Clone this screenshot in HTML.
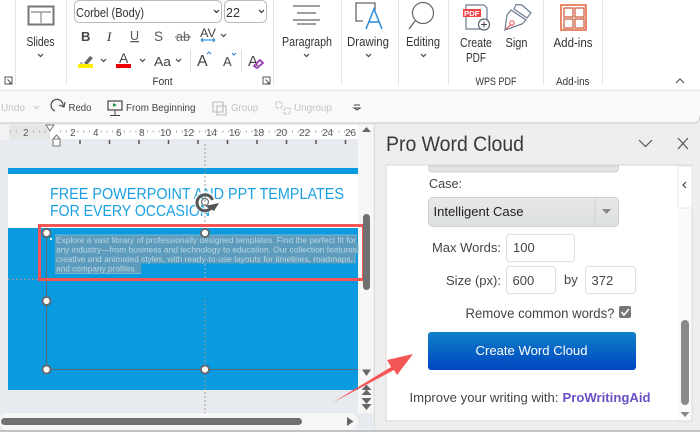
<!DOCTYPE html>
<html><head><meta charset="utf-8">
<style>
html,body{margin:0;padding:0;background:#f0f0f0;}
svg{display:block;font-family:"Liberation Sans",sans-serif;}
</style></head>
<body>
<svg width="700" height="432" viewBox="0 0 700 432" xmlns="http://www.w3.org/2000/svg" fill="#333">
<defs>
<linearGradient id="btn" x1="0" y1="0" x2="0" y2="1"><stop offset="0" stop-color="#0f80c8"/><stop offset="1" stop-color="#0046c0"/></linearGradient>
<linearGradient id="sel" x1="0" y1="0" x2="0" y2="1"><stop offset="0" stop-color="#e8e8e8"/><stop offset="1" stop-color="#dcdfe0"/></linearGradient>
</defs>
<rect width="700" height="432" fill="#eeeeee"/>
<!-- ribbon -->
<rect x="0" y="0" width="700" height="89" fill="#fff"/>
<rect x="0" y="89" width="700" height="3" fill="#f0f0f0"/>
<path d="M0 92H700V116Q700 123 693 123H0Z" fill="#f9f9f9"/>
<path d="M0 123H693Q700 123 700 116" fill="none" stroke="#c8c8c8" stroke-width="1"/>
<g stroke="#e4e4e4" stroke-width="1">
<path d="M15.500 0V85M66.500 0V85M273.500 0V85M341.500 0V85M398.500 0V85M448.500 0V85M543.500 0V85M602.500 0V85"/>
</g>
<!-- Slides -->
<g fill="none" stroke="#777" stroke-width="2"><rect x="28.500" y="6.500" width="25" height="18"/></g>
<path d="M31 12H51M41 12V23" stroke="#888" stroke-width="1.200" fill="none"/>
<text x="26.500" y="46" font-size="13" textLength="28" lengthAdjust="spacingAndGlyphs">Slides</text>
<path d="M38 54l2.500 2.500 2.500-2.500" stroke="#444" fill="none" stroke-width="1.200"/>
<path d="M5 77h7v7h-7zM7.500 79.500l4 4M12 80.500v3h-3" stroke="#555" fill="none" stroke-width="1"/>
<!-- Font box -->
<rect x="74.500" y="0.500" width="147" height="22" rx="5" fill="#fff" stroke="#bbb"/>
<rect x="224.500" y="0.500" width="42" height="22" rx="5" fill="#fff" stroke="#bbb"/>
<text x="76" y="17" font-size="13" textLength="68" lengthAdjust="spacingAndGlyphs">Corbel (Body)</text>
<text x="226" y="17" font-size="12.500">22</text>
<path d="M214 10l2.500 2.500 2.500-2.500M259 10l2.500 2.500 2.500-2.500" stroke="#333" fill="none" stroke-width="1.200"/>
<!-- font row 1 -->
<text x="81" y="41" font-size="13" font-weight="bold" fill="#444">B</text>
<text x="107" y="41" font-size="13" font-style="italic" style="font-family:'Liberation Serif',serif">I</text>
<text x="130" y="40" font-size="12.500" text-decoration="underline" fill="#555">U</text>
<text x="154" y="41" font-size="13.500" fill="#555">S</text>
<text x="176" y="41" font-size="12.500" fill="#666">ab</text>
<path d="M175 37H191" stroke="#666" stroke-width="1"/>
<text x="200" y="37" font-size="12" fill="#444" textLength="16" lengthAdjust="spacingAndGlyphs">AV</text>
<path d="M201 40H215M201 40l2-2M201 40l2 2M215 40l-2-2M215 40l-2 2" stroke="#3a8fd8" fill="none" stroke-width="1.200"/>
<path d="M221 34l2.500 2.500 2.500-2.500" stroke="#444" fill="none" stroke-width="1.200"/>
<!-- font row 2 -->
<path d="M84 63l6-7 3 2-6 7z" fill="#666"/><path d="M80 63H83" stroke="#777"/>
<rect x="78" y="64" width="15" height="4" fill="#ffee00"/>
<path d="M101 59l2.500 2.500 2.500-2.500M140 59l2.500 2.500 2.500-2.500M176 59l2.500 2.500 2.500-2.500" stroke="#444" fill="none" stroke-width="1.200"/>
<text x="119" y="63" font-size="14" fill="#444">A</text>
<rect x="116" y="64" width="15" height="4" fill="#ee0000"/>
<text x="154" y="66" font-size="13" fill="#444" textLength="17" lengthAdjust="spacingAndGlyphs">Aa</text>
<path d="M190.500 50V72M241.500 50V72" stroke="#ddd"/>
<text x="197" y="66" font-size="16" fill="#444">A</text>
<path d="M207 54l2-2 2 2" stroke="#2a7fd0" fill="none"/>
<text x="223" y="66" font-size="13" fill="#444">A</text>
<path d="M232 53l2 2 2-2" stroke="#2a7fd0" fill="none"/>
<text x="248" y="66" font-size="15" fill="#444">A</text>
<path d="M254 66l6-6 3 3-6 5z" fill="none" stroke="#9a3fb8" stroke-width="1.800"/>
<text x="152.500" y="85" font-size="11" textLength="20" lengthAdjust="spacingAndGlyphs">Font</text>
<path d="M263 77h7v7h-7zM265.500 79.500l4 4M270 80.500v3h-3" stroke="#555" fill="none" stroke-width="1"/>
<!-- Paragraph -->
<path d="M293 6H320M297 13H316M293 20H320M297 24H316" stroke="#666" stroke-width="1.300" fill="none"/>
<text x="282" y="46" font-size="13" textLength="50" lengthAdjust="spacingAndGlyphs">Paragraph</text>
<path d="M304 54l2.500 2.500 2.500-2.500" stroke="#444" fill="none" stroke-width="1.200"/>
<!-- Drawing -->
<path d="M368 3H356V21H363M368 3H375V10" fill="none" stroke="#666" stroke-width="1.300"/>
<path d="M366 29l8-20 8 20M369 22H379" fill="none" stroke="#2a8ad8" stroke-width="1.500"/>
<text x="347" y="46" font-size="13" textLength="42" lengthAdjust="spacingAndGlyphs">Drawing</text>
<path d="M366 54l2.500 2.500 2.500-2.500" stroke="#444" fill="none" stroke-width="1.200"/>
<!-- Editing -->
<circle cx="423" cy="13" r="10.500" fill="none" stroke="#666" stroke-width="1.200"/>
<path d="M415 21L409 29" stroke="#666" stroke-width="1.400"/>
<text x="406" y="46" font-size="13" textLength="34" lengthAdjust="spacingAndGlyphs">Editing</text>
<path d="M421 54l2.500 2.500 2.500-2.500" stroke="#444" fill="none" stroke-width="1.200"/>
<!-- Create PDF -->
<path d="M466 5H484L487 8V29H466Z" fill="#fff" stroke="#6c7c90" stroke-width="1.200"/>
<rect x="463" y="9" width="18" height="8" fill="#f04048"/>
<text x="464" y="16" font-size="7" font-weight="bold" fill="#fff" textLength="15.500" lengthAdjust="spacingAndGlyphs">PDF</text>
<circle cx="484" cy="24.500" r="5.500" fill="#fff" stroke="#566" stroke-width="1.200"/>
<path d="M481 24.500H487M484 21.500V27.500" stroke="#445" stroke-width="1"/>
<text x="460" y="47" font-size="13" textLength="32" lengthAdjust="spacingAndGlyphs">Create</text>
<text x="466" y="62" font-size="13" textLength="20" lengthAdjust="spacingAndGlyphs">PDF</text>
<!-- Sign -->
<path d="M511 10L526 20 522 24 505 30 507 15Z" fill="none" stroke="#6c7c90" stroke-width="1.200"/>
<path d="M516 4.500L522 5 531 13 527 18 514 9Z" fill="#fff" stroke="#6c7c90" stroke-width="1.200"/>
<circle cx="512" cy="23" r="2.200" fill="none" stroke="#f04048"/><path d="M506 29L511 24.500" stroke="#f04048"/>
<text x="505.500" y="47" font-size="13" textLength="22" lengthAdjust="spacingAndGlyphs">Sign</text>
<!-- Add-ins -->
<rect x="561" y="5" width="25" height="25" fill="none" stroke="#e66a48" stroke-width="1.600"/>
<path d="M564 8h9v9h-9zM575 8h9v9h-9zM564 19h9v9h-9zM575 19h9v9h-9z" fill="none" stroke="#c95a3a" stroke-width="1.200"/>
<text x="553.500" y="47" font-size="13" textLength="39" lengthAdjust="spacingAndGlyphs">Add-ins</text>
<text x="475.500" y="85" font-size="11" textLength="41" lengthAdjust="spacingAndGlyphs">WPS PDF</text>
<text x="556" y="85" font-size="11" textLength="33.500" lengthAdjust="spacingAndGlyphs">Add-ins</text>
<path d="M676 83l4-4 4 4" stroke="#555" fill="none" stroke-width="1.200"/>
<!-- QAT -->
<text x="1" y="111" font-size="10.500" fill="#c4c4c4" textLength="24" lengthAdjust="spacingAndGlyphs">Undo</text>
<path d="M34 106l2.500 2.500 2.500-2.500" stroke="#c4c4c4" fill="none"/>
<path d="M63 106A6 6 0 1 0 55 111" fill="none" stroke="#444" stroke-width="1.100"/>
<path d="M59 105l5 2 1-5" fill="none" stroke="#444" stroke-width="1.100"/>
<text x="68.500" y="111" font-size="10.500" fill="#444" textLength="23" lengthAdjust="spacingAndGlyphs">Redo</text>
<rect x="108" y="101" width="14" height="9" fill="none" stroke="#444" stroke-width="1.200"/>
<path d="M113 103l4 2-4 2z" fill="#2a9a4a"/><path d="M115 110v5M110 115.500H120" stroke="#444"/>
<text x="126" y="111" font-size="10.500" fill="#444" textLength="69.500" lengthAdjust="spacingAndGlyphs">From Beginning</text>
<path d="M213 102h10v10h-10zM217 106h9v9h-9z" fill="none" stroke="#bbb" stroke-width="1.100"/>
<text x="231" y="111" font-size="10.500" fill="#c4c4c4" textLength="27" lengthAdjust="spacingAndGlyphs">Group</text>
<path d="M276 102h6v6h-6zM284 108h6v6h-6z" fill="none" stroke="#bbb" stroke-dasharray="2 1"/>
<text x="294" y="111" font-size="10.500" fill="#c4c4c4" textLength="38" lengthAdjust="spacingAndGlyphs">Ungroup</text>
<path d="M354 105H360M354 108l3 2 3-2z" stroke="#444" fill="none"/>

<!-- Slide pane -->
<rect x="1" y="125" width="372" height="303" fill="#e7ebef"/>
<rect x="358" y="125" width="15" height="288" fill="#f6f6f6"/>
<!-- ruler -->
<rect x="9" y="125" width="349" height="14" fill="#fff"/>
<rect x="9" y="125" width="41" height="14" fill="#e6e6e6"/>
<rect x="0" y="125" width="9" height="15" fill="#f3f3f3"/>
<path d="M10 131.500H50M60 131.500H356" stroke="#aaa" stroke-width="2" stroke-dasharray="1 4.800"/>
<g font-size="10" fill="#555">
<rect x="21" y="127" width="9" height="10" fill="#e6e6e6"/>
<text x="23" y="136">2</text><text x="70" y="136">2</text><text x="93" y="136">4</text><text x="116" y="136">6</text><text x="139" y="136">8</text>
<text x="160" y="136">10</text><text x="183" y="136">12</text><text x="206" y="136">14</text><text x="229" y="136">16</text><text x="253" y="136">18</text><text x="276" y="136">20</text><text x="299" y="136">22</text><text x="322" y="136">24</text><text x="345" y="136">26</text>
</g>
<path d="M80 140v4M109.500 140v4M139 140v4M168.500 140v4M198 140v4M227.500 140v4M257 140v4M286.500 140v4M316 140v4M345.500 140v4" stroke="#555" stroke-width="1.500"/>
<path d="M46 125h8l-4 6z" fill="#fff" stroke="#777"/>
<path d="M53 139l3.500-4 3.500 4v7h-7zM53 139h7" fill="#fff" stroke="#777"/>
<!-- slide -->
<rect x="8" y="168" width="350" height="222" fill="#fff"/>
<rect x="8" y="168" width="350" height="6" fill="#0a9ae0"/>
<rect x="8" y="228" width="350" height="162" fill="#0a9ae0"/>
<text x="50" y="199" font-size="15.500" fill="#1aa0e2" textLength="294" lengthAdjust="spacingAndGlyphs">FREE POWERPOINT AND PPT TEMPLATES</text>
<text x="50" y="216" font-size="15.500" fill="#1aa0e2" textLength="160" lengthAdjust="spacingAndGlyphs">FOR EVERY OCCASION</text>
<!-- guides -->
<path d="M205 144V228M205 300V413M8 279.500H358" stroke="#999" stroke-dasharray="2 2" fill="none"/>
<path d="M205 228V280" stroke="#8ab8d0" stroke-dasharray="2 2"/>
<path d="M46.500 233V369.500H358" stroke="#5a6a70" fill="none" stroke-width="1"/>
<!-- text selection -->
<g fill="#5d9cbc">
<rect x="55" y="235" width="302" height="9.500"/><rect x="55" y="244" width="303" height="10"/><rect x="55" y="253.500" width="300" height="10"/><rect x="55" y="263" width="86" height="10.500"/>
</g>
<path d="M55 235H357M55 273.500H141M358 244V254M355 254V263" stroke="#7ab8d6" fill="none"/>
<g font-size="8.700" fill="#bcd6e2">
<text x="56" y="243" textLength="300" lengthAdjust="spacingAndGlyphs">Explore a vast library of professionally designed templates. Find the perfect fit for</text>
<text x="56" y="252.500" textLength="301" lengthAdjust="spacingAndGlyphs">any industry—from business and technology to education. Our collection features</text>
<text x="56" y="262" textLength="297" lengthAdjust="spacingAndGlyphs">creative and animated styles, with ready-to-use layouts for timelines, roadmaps,</text>
<text x="56" y="271.500" textLength="81" lengthAdjust="spacingAndGlyphs">and company profiles.</text>
</g>
<rect x="50" y="238" width="2" height="2" fill="#fff"/>
<!-- rotate -->
<circle cx="205" cy="202" r="8.500" fill="none" stroke="#fff" stroke-width="5" opacity=".8"/>
<path d="M211 208A8 8 0 1 1 212.500 200" fill="none" stroke="#555" stroke-width="3"/>
<path d="M205 206l14-3-5 8z" fill="#555"/>
<circle cx="205" cy="202" r="3.500" fill="none" stroke="#777" stroke-width="1.300"/>
<!-- handles -->
<g fill="#fff" stroke="#666" stroke-width="1.800">
<circle cx="46.500" cy="233" r="4"/><circle cx="205" cy="233" r="4"/><circle cx="46.500" cy="301" r="4"/><circle cx="46.500" cy="369.500" r="4"/><circle cx="205" cy="369.500" r="4"/>
</g>
<!-- red rect -->
<rect x="39.500" y="225.500" width="324" height="54" fill="none" stroke="#f45555" stroke-width="3"/>
<!-- v scroll -->
<rect x="363" y="214" width="7" height="76" rx="3.500" fill="#707070"/>
<path d="M362 132l4.500-5 4.500 5z" fill="#666"/>
<path d="M362 369.500h9l-4.500 6.500z" fill="#666"/>
<path d="M361.500 390l5-5.500 5 5.500zM361.500 395l5-5.500 5 5.500z" fill="#666"/>
<path d="M361.500 398h10l-5 6zM361.500 404h10l-5 6z" fill="#666"/>
<!-- h scroll -->
<rect x="0" y="413" width="358" height="17" rx="8" fill="#f6f6f6"/>
<rect x="1" y="418" width="301" height="7" rx="3.500" fill="#707070"/>
<path d="M347 417l6.500 4.500-6.500 4.500z" fill="#666"/>
<rect x="0" y="430" width="700" height="2" fill="#bfc4c8"/>
<!-- panel -->
<rect x="375" y="124" width="325" height="306" fill="#eeeeee"/>
<path d="M374.500 124V430" stroke="#dcdcdc"/>
<text x="386" y="151" font-size="21.500" fill="#3a3a3a" textLength="138" lengthAdjust="spacingAndGlyphs">Pro Word Cloud</text>
<path d="M639 140l6.500 6.500 6.500-6.500M678 138l10 11M688 138l-10 11" stroke="#555" fill="none" stroke-width="1.200"/>
<rect x="386" y="165" width="306" height="256" fill="#fff" stroke="#d8d8d8"/>
<rect x="678" y="166" width="13" height="254" fill="#fafafa"/>
<rect x="678" y="166" width="14" height="42" fill="#fff" stroke="#e6e6e6"/>
<path d="M686 182l-3 3 3 3" stroke="#444" fill="none" stroke-width="1.200"/>
<!-- selects -->
<path d="M428.500 166V168Q428.500 172 433 172H614Q618.500 172 618.500 168V166Z" fill="#e2e3e4" stroke="#d2d2d2"/>
<text x="429" y="188" font-size="13" fill="#444" textLength="33" lengthAdjust="spacingAndGlyphs">Case:</text>
<rect x="428.500" y="197.500" width="190" height="29" rx="4" fill="url(#sel)" stroke="#d0d0d0"/>
<path d="M595 198V226" stroke="#cfcfcf"/>
<text x="433.500" y="216" font-size="13" fill="#222" textLength="90" lengthAdjust="spacingAndGlyphs">Intelligent Case</text>
<path d="M602 209h9l-4.500 5z" fill="#888"/>
<!-- inputs -->
<text x="432" y="252" font-size="13" fill="#444" textLength="69" lengthAdjust="spacingAndGlyphs">Max Words:</text>
<rect x="506.500" y="234.500" width="68" height="27" rx="3" fill="#fff" stroke="#ddd"/>
<text x="513" y="252" font-size="13" fill="#444">100</text>
<text x="446" y="285" font-size="13" fill="#444" textLength="55" lengthAdjust="spacingAndGlyphs">Size (px):</text>
<rect x="506.500" y="266.500" width="49" height="27" rx="3" fill="#fff" stroke="#ddd"/>
<text x="512.500" y="285" font-size="13" fill="#444">600</text>
<text x="564" y="284" font-size="13" fill="#444">by</text>
<rect x="585.500" y="266.500" width="50" height="27" rx="3" fill="#fff" stroke="#ddd"/>
<text x="591.500" y="285" font-size="13" fill="#444">372</text>
<text x="465.500" y="318" font-size="13.500" fill="#444" textLength="149" lengthAdjust="spacingAndGlyphs">Remove common words?</text>
<rect x="619" y="306" width="12" height="12" rx="2" fill="#777"/>
<path d="M621.500 312l2.500 3 5-6" stroke="#fff" stroke-width="1.600" fill="none"/>
<!-- button -->
<rect x="428" y="332" width="208" height="38" rx="3" fill="url(#btn)"/>
<text x="475.500" y="355" font-size="13" fill="#fff" textLength="112" lengthAdjust="spacingAndGlyphs">Create Word Cloud</text>
<text x="409.500" y="402" font-size="13" fill="#444" textLength="149" lengthAdjust="spacingAndGlyphs">Improve your writing with:</text>
<text x="562.500" y="402" font-size="13" font-weight="bold" fill="#6a4fc8" textLength="88" lengthAdjust="spacingAndGlyphs">ProWritingAid</text>
<!-- panel scroll -->
<rect x="681" y="320" width="8" height="85" rx="4" fill="#8a8a8a"/>
<path d="M680.500 412h9l-4.500 5z" fill="#888"/>
<!-- arrow -->
<path d="M332 403L391 367 387 360 413 354 397 375 394 370Z" fill="#f45555"/>
</svg>
</body></html>
